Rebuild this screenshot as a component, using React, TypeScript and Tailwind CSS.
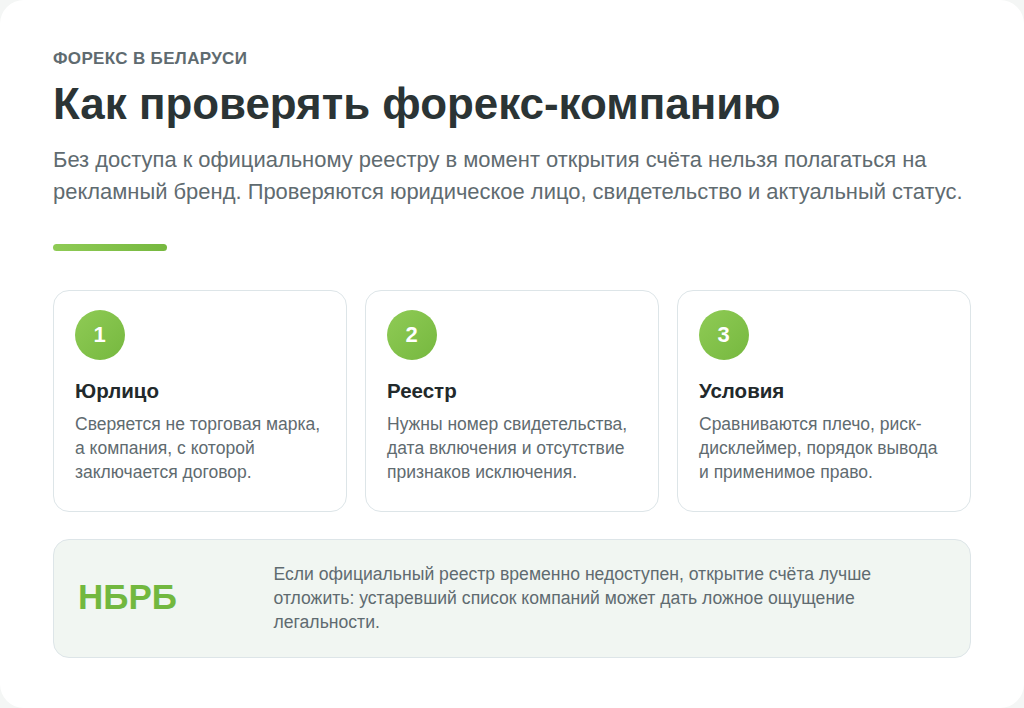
const cards = [
  { n: "1", title: "Юрлицо", text: "Сверяется не торговая марка, а компания, с которой заключается договор." },
  { n: "2", title: "Реестр", text: "Нужны номер свидетельства, дата включения и отсутствие признаков исключения." },
  { n: "3", title: "Условия", text: "Сравниваются плечо, риск-дисклеймер, порядок вывода и применимое право." },
];

export default function App() {
  return (
    <div className="w-[1024px] h-[708px] bg-[#f4f6f5] overflow-hidden font-['Liberation_Sans',Arial,sans-serif]">
      <div className="w-full h-full bg-white rounded-[24px] px-[53px] pt-[49px]">
        <div className="text-[17px] leading-[20px] tracking-[0.02em] font-bold text-[#5f6b70]">ФОРЕКС В БЕЛАРУСИ</div>
        <h1 className="mt-[5px] text-[43.9px] leading-[60px] font-bold text-[#2b3435]">Как проверять форекс-компанию</h1>
        <p className="mt-[10px] text-[21.95px] leading-[32px] text-[#5f6b70] w-[918px]">
          Без доступа к официальному реестру в момент открытия счёта нельзя полагаться на рекламный бренд. Проверяются юридическое лицо, свидетельство и актуальный статус.
        </p>
        <div className="mt-[36px] w-[114px] h-[7px] rounded-full bg-gradient-to-r from-[#8fcb55] to-[#76b83f]" />
        <div className="mt-[39px] grid grid-cols-3 gap-[18px]">
          {cards.map((c) => (
            <div key={c.n} className="h-[222px] rounded-[16px] border-[1.5px] border-[#dde5e8] bg-white pl-[20.5px] pr-[20px] pt-[18.5px]">
              <div className="w-[50px] h-[50px] rounded-full bg-gradient-to-br from-[#8fcb55] to-[#76b83f] flex items-center justify-center text-white font-bold text-[22px]">
                {c.n}
              </div>
              <div className="mt-[19.5px] ml-[0.5px] text-[20.5px] leading-[24px] font-bold text-[#22292b]">{c.title}</div>
              <p className="mt-[9px] ml-[0.5px] text-[17.5px] leading-[24px] text-[#5f6b70]">{c.text}</p>
            </div>
          ))}
        </div>
        <div className="mt-[27px] h-[119px] rounded-[16px] border-[1.5px] border-[#dde5e8] bg-[#f1f6f2] flex items-center pl-[24px] pr-[24px] pb-[2px]">
          <div className="w-[195.5px] shrink-0 text-[35px] font-bold text-[#72b83f]">НБРБ</div>
          <p className="w-[640px] text-[17.6px] leading-[24px] text-[#5f6b70]">
            Если официальный реестр временно недоступен, открытие счёта лучше отложить: устаревший список компаний может дать ложное ощущение легальности.
          </p>
        </div>
      </div>
    </div>
  );
}
